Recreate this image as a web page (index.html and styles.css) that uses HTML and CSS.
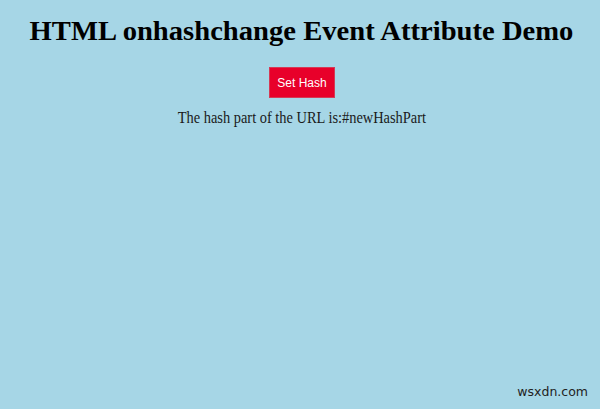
FILE: index.html
```html
<!DOCTYPE html>
<html>
<head>
<meta charset="utf-8">
<link rel="stylesheet" href="styles.css">
</head>
<body>
<div class="page">
  <h1 class="title">HTML onhashchange Event Attribute Demo</h1>
  <button class="btn">Set Hash</button>
  <p class="result">The hash part of the URL is:#newHashPart</p>
</div>
<div class="watermark">wsxdn.com</div>
</body>
</html>
```

FILE: styles.css
```css
html, body {
  margin: 0;
  padding: 0;
  height: 100%;
}
body {
  background: #a6d6e6;
  font-family: "Liberation Serif", "Times New Roman", serif;
  color: #111;
  position: relative;
  overflow: hidden;
}
.page {
  display: flex;
  flex-direction: column;
  align-items: center;
  padding-top: 15px;
  padding-left: 4px;
}
.title {
  margin: 0;
  font-size: 27px;
  font-weight: bold;
  line-height: 32px;
  color: #000;
  white-space: nowrap;
  transform: scaleX(1.06);
}
.btn {
  margin-top: 20px;
  width: 66px;
  height: 31px;
  background: #e8002a;
  border: 1px solid #d43a55;
  color: #fff;
  font-family: "Liberation Sans", Arial, sans-serif;
  font-size: 12px;
  padding: 0;
}
.result {
  margin: 10px 0 0;
  font-size: 16px;
  line-height: 20px;
  color: #1a1a1a;
  white-space: nowrap;
  transform: scaleX(0.9);
}
.watermark {
  position: absolute;
  right: 12px;
  bottom: 10px;
  font-family: "DejaVu Sans", sans-serif;
  font-size: 12.5px;
  color: #222;
}
```
